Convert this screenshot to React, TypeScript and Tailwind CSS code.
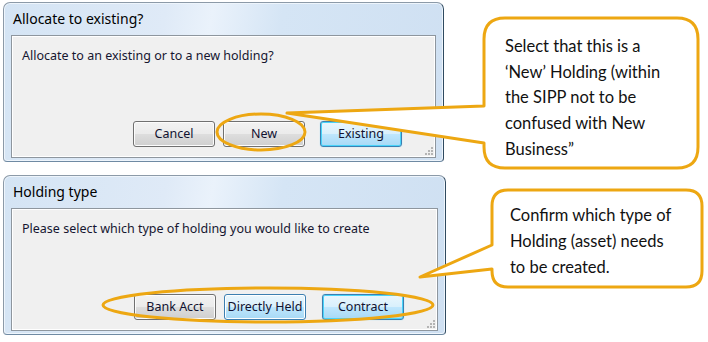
import React from "react";

type Btn = { label: string; kind?: "normal" | "default" | "hot"; className?: string };

const btnKinds = {
  normal:
    "border-[#707070] bg-[linear-gradient(#f2f2f2_0%,#ebebeb_48%,#dddddd_52%,#cfcfcf_100%)] shadow-[inset_0_0_0_1px_#fcfcfc]",
  default:
    "border-[#3c7fb1] bg-[linear-gradient(#eaf6fd_0%,#d9f0fc_48%,#bee6fd_52%,#a7d9f5_100%)] shadow-[inset_0_0_0_1px_#48d4fa,0_0_1px_#6fd3f7]",
  hot:
    "border-[#3c7fb1] bg-[linear-gradient(#eaf6fd_0%,#d9f0fc_48%,#bee6fd_52%,#a7d9f5_100%)] shadow-[inset_0_0_0_1px_#ffffff]",
};

const Grip = () => (
  <svg width="9" height="9" viewBox="0 0 9 9" className="absolute right-[2px] bottom-[2px]">
    {[
      [7, 1],
      [4, 4],
      [7, 4],
      [1, 7],
      [4, 7],
      [7, 7],
    ].map(([x, y], i) => (
      <rect key={i} x={x} y={y} width="2" height="2" fill="#b4b4b4" />
    ))}
  </svg>
);

const Dialog = ({
  title,
  message,
  buttons,
  className,
}: {
  title: string;
  message: string;
  buttons: Btn[];
  className: string;
}) => (
  <div
    className={`flex flex-col rounded-t-[7px] rounded-b-[4px] border border-[#8c9aa8] border-r-[#2f4a60] border-b-[#6f8aa3] bg-[linear-gradient(100deg,#d4e4f4_0%,#dfeaf7_35%,#eaf2fb_45%,#d5e5f5_60%,#cfe0f2_100%)] shadow-[inset_0_0_0_1px_#eef5fc] ${className}`}
  >
    <div className="h-[32px] pl-[9px] pt-[6px] text-[14px] leading-[20px] text-black">{title}</div>
    <div className="relative mx-[7px] mb-[3px] flex flex-1 flex-col border border-[#8e969e] bg-[#f0f0f0] shadow-[inset_0_0_0_1px_#ffffff]">
      <div className="pl-[10px] pt-[12px] text-[12.5px] leading-[16px] text-[#161630]">{message}</div>
      <div className="mt-auto mb-[10px] flex">
        {buttons.map((b) => (
          <div
            key={b.label}
            className={`flex h-[26px] w-[82px] items-center justify-center rounded-[3px] border text-[12.5px] text-[#121230] ${btnKinds[b.kind ?? "normal"]} ${b.className ?? ""}`}
          >
            {b.label}
          </div>
        ))}
      </div>
      <Grip />
    </div>
  </div>
);

export default function App() {
  return (
    <div className="relative h-[342px] w-[708px] overflow-hidden bg-white font-['Noto_Sans',sans-serif]">
      <div className="flex items-start">
        <Dialog
          title="Allocate to existing?"
          message="Allocate to an existing or to a new holding?"
          className="ml-[3px] mt-[2px] h-[160px] w-[441px]"
          buttons={[
            { label: "Cancel", className: "ml-[121px]" },
            { label: "New", className: "ml-[8px]" },
            { label: "Existing", kind: "default", className: "ml-[15px]" },
          ]}
        />
        <div className="relative z-10 ml-[40px] mt-[18px] h-[150px] w-[214px] pl-[21px] pt-[16px] font-['Lato',sans-serif] text-[16.5px] leading-[25.7px] text-[#111]">
          Select that this is a<br />
          ‘New’ Holding (within<br />
          the SIPP not to be<br />
          confused with New<br />
          Business”
        </div>
      </div>
      <div className="flex items-start">
        <Dialog
          title="Holding type"
          message="Please select which type of holding you would like to create"
          className="ml-[3px] mt-[7px] h-[160px] w-[443px]"
          buttons={[
            { label: "Bank Acct", className: "ml-[122px]" },
            { label: "Directly Held", kind: "hot", className: "ml-[8px]" },
            { label: "Contract", kind: "default", className: "ml-[16px]" },
          ]}
        />
        <div className="relative z-10 ml-[46px] mt-[22px] h-[97px] w-[210px] pl-[18px] pt-[12px] font-['Lato',sans-serif] text-[16.5px] leading-[26px] text-[#111]">
          Confirm which type of
          <br />
          Holding (asset) needs
          <br />
          to be created.
        </div>
      </div>

      <svg
        className="pointer-events-none absolute inset-0 z-[5]"
        width="708"
        height="342"
        viewBox="0 0 708 342"
      >
        <path
          d="M 505 18 H 677 Q 698 18 698 39 V 147 Q 698 168 677 168 H 505 Q 484 168 484 147 V 143 L 287 113 L 484 106 V 39 Q 484 18 505 18 Z"
          fill="#ffffff"
          stroke="#eda712"
          strokeWidth="3"
          strokeLinejoin="round"
        />
        <path
          d="M 508 190 H 686 Q 702 190 702 206 V 271 Q 702 287 686 287 H 508 Q 492 287 492 271 V 269 L 420 277 L 492 245 V 206 Q 492 190 508 190 Z"
          fill="#ffffff"
          stroke="#eda712"
          strokeWidth="3"
          strokeLinejoin="round"
        />
        <ellipse cx="261" cy="132" rx="44" ry="18" fill="none" stroke="#eda712" strokeWidth="3" />
        <ellipse cx="268" cy="305" rx="165" ry="17" fill="none" stroke="#eda712" strokeWidth="3" />
      </svg>
    </div>
  );
}
